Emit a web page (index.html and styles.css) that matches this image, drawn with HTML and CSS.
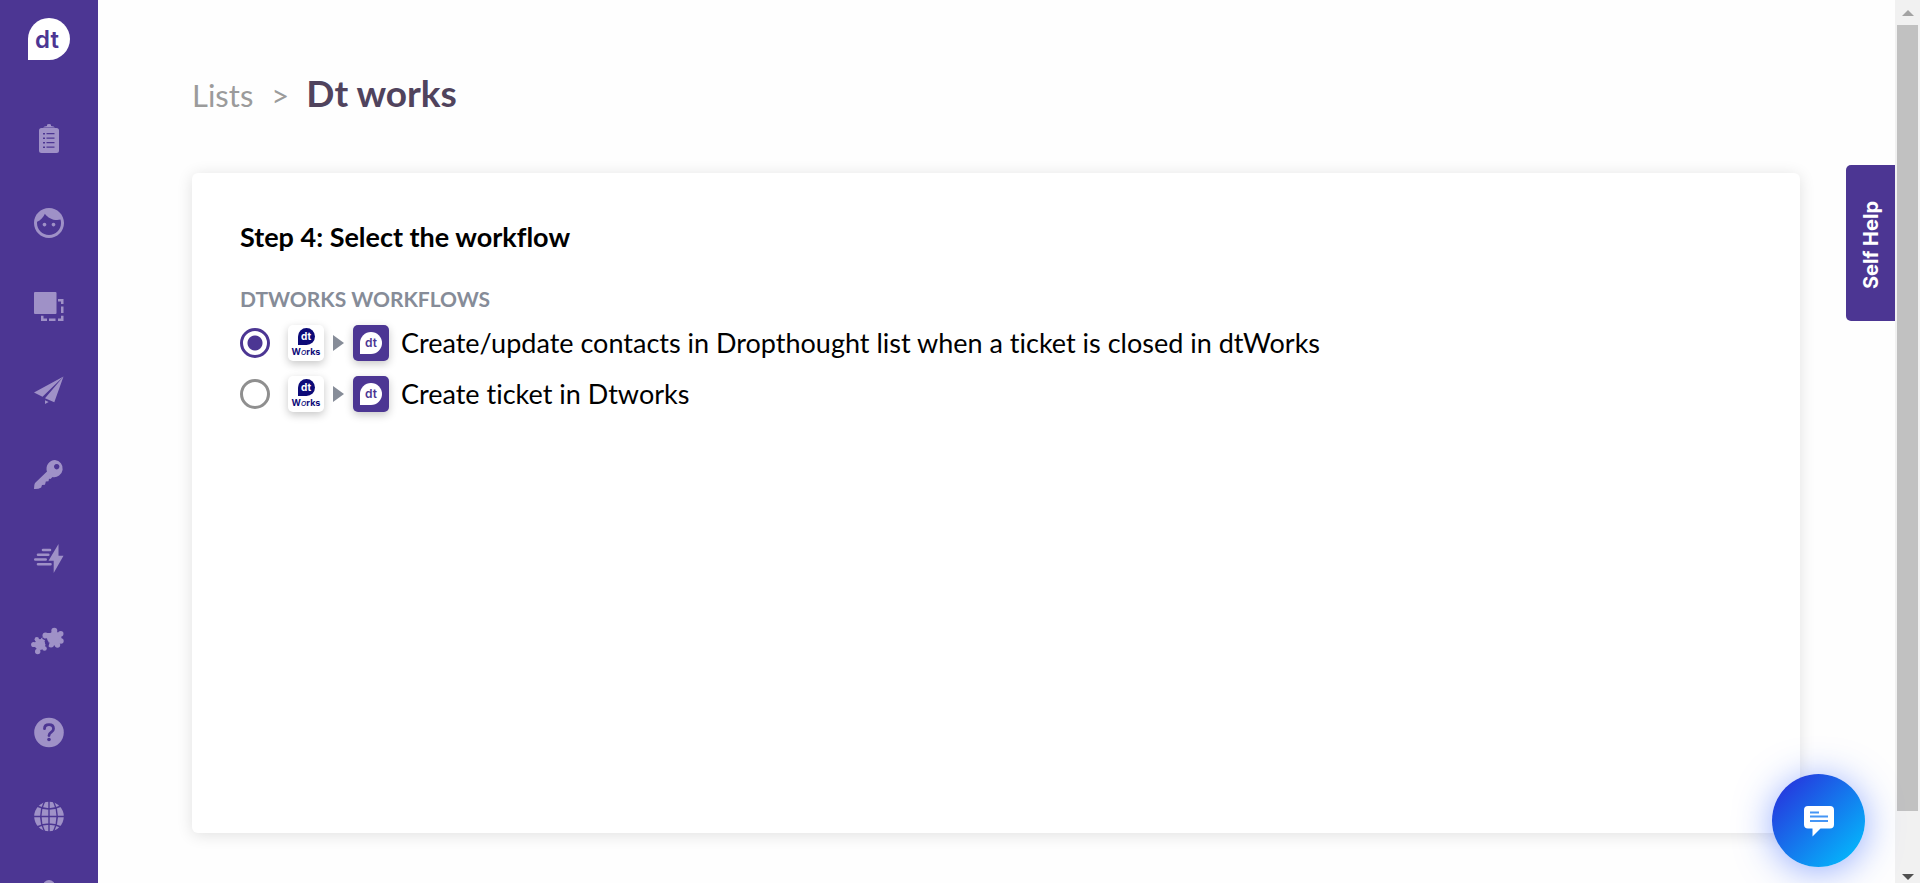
FILE: index.html
```html
<!DOCTYPE html>
<html lang="en">
  <head>
    <meta charset="UTF-8" />
    <meta name="viewport" content="width=device-width, initial-scale=1.0" />
    <title>Dt works</title>
    <link rel="stylesheet" href="styles.css">
  </head>
  <body>
    <nav class="sidebar">
      <a class="logo" href="#">dt</a>

      <div class="nav-group">
        <a class="nav-link" href="#" aria-label="Surveys">
          <svg viewBox="0 0 30 30">
            <path fill-rule="evenodd" d="M7.500 4h15q2.500 0 2.500 2.500v20q0 2.500-2.500 2.500h-15q-2.500 0-2.500-2.500v-20q0-2.500 2.500-2.500zM9 9h2v1.500H9zM12.500 9H20.500v1.200H12.500zM9 13.500h2v1.500H9zM12.500 13.500H20.500v1.200H12.500zM9 18h2v1.500H9zM12.500 18H20.500v1.200H12.500zM9 22.500h2v1.500H9zM12.500 22.500H20.500v1.200H12.500z" />
            <path d="M9 3.400q1-1.200 4-1.400v-1q0-1 2-1t2 1v1q3 .2 4 1.400z" />
          </svg>
        </a>
        <a class="nav-link" href="#" aria-label="Contacts">
          <svg viewBox="2 2 20 20">
            <path d="M9 11.750c-.69 0-1.250.56-1.250 1.250s.56 1.250 1.250 1.250 1.250-.56 1.250-1.250-.56-1.250-1.250-1.250zm6 0c-.69 0-1.250.56-1.250 1.250s.56 1.250 1.250 1.250 1.250-.56 1.250-1.250-.56-1.250-1.250-1.250zM12 2C6.480 2 2 6.480 2 12s4.480 10 10 10 10-4.480 10-10S17.520 2 12 2zm0 18c-4.410 0-8-3.590-8-8 0-.29.02-.58.05-.86 2.360-1.050 4.230-2.980 5.210-5.370C11.070 8.330 14.050 10 17.420 10c.78 0 1.530-.09 2.250-.26.21.71.33 1.470.33 2.260 0 4.410-3.590 8-8 8z" />
          </svg>
        </a>
        <a class="nav-link" href="#" aria-label="Templates">
          <svg viewBox="0 0 30 30">
            <rect width="22.500" height="22" rx="1" />
            <path d="M24 7h5.500v5h-2.500v-2.500h-3zM27 14.500h2.500v6.500H27zM27 23.700h2.500v5.300h-5.500v-2.500h3zM15 26.500h6.500v2.500H15zM7 23.700h2.500v2.800h3.500v2.500H7z" />
          </svg>
        </a>
        <a class="nav-link" href="#" aria-label="Send">
          <svg viewBox="0 0 30 30">
            <path d="M29.500 .5L0 16.500l8.500 4.300zM29.500 .5L20.300 26.300l-9.300-4zM11 24.300l3.700 1.600-3.700 2z" />
          </svg>
        </a>
        <a class="nav-link" href="#" aria-label="Access">
          <svg viewBox="0 0 30 30">
            <path fill-rule="evenodd" d="M21 0a8.600 8.600 0 1 1-2.500 17l-2 2-1.500-.2-.5 2.500-2.700.2-.8 3.200-3 .3-.8 2.500q-2.700 1.700-7.200 1.500 0-4.500 1-6L13 11.500A8.600 8.600 0 0 1 21 0zM22.700 4a2.700 2.700 0 1 0 .01 0z" />
          </svg>
        </a>
        <a class="nav-link" href="#" aria-label="Triggers">
          <svg viewBox="0 0 30 30">
            <path d="M24.500 0L14.500 16.700h5.200V29L29.500 11.700h-5z" />
            <path class="line" d="M9 6h7M4 10.700h10.300M1.300 15.500h10.400M4 20.200h12.500" />
          </svg>
        </a>
        <a class="nav-link" href="#" aria-label="Integrations">
          <svg viewBox="0 0 30 30">
            <circle cx="20.500" cy="10.500" r="7" />
            <circle cx="20.300" cy="2.800" r="3" />
            <circle cx="26.700" cy="5.800" r="2.800" />
            <circle cx="27" cy="13" r="2.700" />
            <circle cx="23.500" cy="17" r="2.700" />
            <circle cx="17" cy="16.500" r="3" />
            <circle cx="11.500" cy="7.500" r="3" />
            <path d="M11 5h9v8h-6z" />
            <circle cx="6" cy="16.500" r="5.400" />
            <circle cx="-.3" cy="16.500" r="2.600" />
            <circle cx="2.800" cy="11.200" r="2.200" />
            <circle cx="9" cy="11.800" r="2.300" />
            <circle cx="10.500" cy="20.500" r="2.300" />
            <circle cx="3.700" cy="23.500" r="2.700" />
            <path class="cut" d="M8.500 10.200l3.500 2-.3 2.800 3 .2-1.200 3.800" />
          </svg>
        </a>
      </div>

      <div class="nav-group">
        <a class="nav-link" href="#" aria-label="Help">
          <svg viewBox="0 0 30 30">
            <circle cx="15" cy="14.500" r="14.800" />
            <path class="cut wide" d="M10.500 10.700q0-4 4.500-4t4.500 4q0 2-2.200 3.500t-2.300 3.300" />
            <circle class="dot" cx="15" cy="21.500" r="1.800" />
          </svg>
        </a>
        <a class="nav-link" href="#" aria-label="Language">
          <svg viewBox="0 0 30 30">
            <circle cx="15" cy="14.500" r="14.800" />
            <path class="cut" d="M15-1v31M0 14.500h30M10.500-.5Q3 14.500 10.500 29.500M19.500-.5q7.500 15 0 30M3 4q12 6 24 0M3 25q12-6 24 0" />
          </svg>
        </a>
        <a class="nav-link account" href="#" aria-label="Account">
          <svg viewBox="0 0 30 30">
            <circle cx="15" cy="6" r="6" />
            <path d="M3 30q0-15 12-15t12 15z" />
          </svg>
        </a>
      </div>
    </nav>

    <main class="content">
      <header class="breadcrumb">
        <a class="crumb" href="#">Lists</a>
        <span class="crumb-sep">&gt;</span>
        <h1>Dt works</h1>
      </header>

      <form class="card">
        <h2>Step 4: Select the workflow</h2>
        <fieldset class="workflows">
          <legend>DTWORKS WORKFLOWS</legend>
          <div class="workflow">
            <input type="radio" id="updateContacts" name="workflow" checked />
            <label for="updateContacts">
              <span class="tile works"><span class="drop">dt</span><span class="works-name">W<i>o</i>rks</span></span>
              <span class="arrow"></span>
              <span class="tile dropthought"><span class="drop">dt</span></span>
              <span class="workflow-text">Create/update contacts in Dropthought list when a ticket is closed in dtWorks</span>
            </label>
          </div>
          <div class="workflow">
            <input type="radio" id="createTicket" name="workflow" />
            <label for="createTicket">
              <span class="tile works"><span class="drop">dt</span><span class="works-name">W<i>o</i>rks</span></span>
              <span class="arrow"></span>
              <span class="tile dropthought"><span class="drop">dt</span></span>
              <span class="workflow-text">Create ticket in Dtworks</span>
            </label>
          </div>
        </fieldset>
      </form>

      <button class="self-help" type="button">Self Help</button>
      <button class="chat" type="button" aria-label="Open chat">
        <svg viewBox="0 0 32 32">
          <path d="M5 1h22q4 0 4 4v14.500q0 4-4 4H17.500l-8 8v-8H5q-4 0-4-4V5q0-4 4-4z" fill="#fff" />
          <path d="M7 7.500h9M7 11.500h18M7 16h18" stroke="#4595f5" stroke-width="2" />
        </svg>
      </button>
    </main>

    <div class="scrollbar">
      <span class="scroll-up"></span>
      <span class="scroll-thumb"></span>
      <span class="scroll-down"></span>
    </div>
  </body>
</html>
```

FILE: styles.css
```css
* {
  box-sizing: border-box;
}

body {
  margin: 0;
  height: 100vh;
  display: flex;
  overflow: hidden;
  background: #fefefe;
  color: #000;
  font-family: Lato, "Open Sans", sans-serif;
  font-variant-ligatures: none;
}

/* Sidebar */
.sidebar {
  width: 98px;
  flex-shrink: 0;
  display: flex;
  flex-direction: column;
  align-items: center;
  padding-top: 18px;
  overflow: hidden;
  background: #4c3693;
}

.logo {
  width: 42px;
  height: 42px;
  flex-shrink: 0;
  margin-bottom: 64px;
  padding-right: 4px;
  border-radius: 50% 50% 50% 0;
  background: #fff;
  color: #4c3693;
  font: 600 24px/44px Inter, sans-serif;
  text-align: center;
  text-decoration: none;
}

.nav-group {
  display: flex;
  flex-direction: column;
  gap: 54px;
  margin-bottom: 60px;
}

.nav-link,
.nav-link svg {
  display: block;
  width: 30px;
  height: 30px;
  overflow: visible;
}

.nav-link svg {
  fill: #9f91c7;
}

.nav-link .line {
  stroke: #9f91c7;
  stroke-width: 2.6;
  stroke-linecap: round;
}

.nav-link .cut {
  fill: none;
  stroke: #4c3693;
  stroke-width: 1.4;
}

.nav-link .wide {
  stroke-width: 2.8;
  stroke-linecap: round;
}

.nav-link .dot {
  fill: #4c3693;
}

.account {
  margin-top: -6px;
}

/* Page content */
.content {
  flex: 1;
  display: flex;
  flex-direction: column;
  position: relative;
  padding: 70px 95px 50px 94px;
}

.breadcrumb {
  display: flex;
  align-items: baseline;
  height: 103px;
  color: #9b9b9b;
  font-size: 31px;
}

.crumb {
  color: inherit;
  text-decoration: none;
}

.crumb-sep {
  margin: 0 17px 0 18px;
}

h1 {
  margin: 0;
  color: #50435d;
  font-size: 37px;
  line-height: 46px;
}

.card {
  flex: 1;
  padding: 48px;
  border-radius: 6px;
  background: #fff;
  box-shadow: 0 2px 16px rgba(0, 0, 0, 0.12);
}

h2 {
  margin: 0 0 32px;
  font-size: 27px;
  line-height: 32px;
}

.workflows {
  margin: 0;
  padding: 0;
  border: 0;
}

legend {
  padding: 0;
  margin-bottom: 12px;
  color: #868c98;
  font-size: 21px;
  font-weight: 700;
  line-height: 28px;
}

.workflow {
  display: flex;
  align-items: center;
  margin-bottom: 15px;
}

.workflow input {
  appearance: none;
  width: 30px;
  height: 30px;
  margin: 0 18px 0 0;
  border: 3px solid #8f8f8f;
  border-radius: 50%;
}

.workflow input:checked {
  border-color: #4c3693;
  background: radial-gradient(circle, #4c3693 7px, transparent 8px);
}

.workflow label {
  display: flex;
  align-items: center;
}

.tile {
  width: 36px;
  height: 36px;
  display: flex;
  flex-direction: column;
  align-items: center;
  justify-content: center;
  border-radius: 5px;
  background: #fff;
  box-shadow: 0 3px 8px rgba(0, 0, 0, 0.22);
  font-family: Inter, sans-serif;
  font-weight: 700;
}

.drop {
  width: 17px;
  height: 17px;
  border-radius: 50% 50% 50% 0;
  background: #0c0a78;
  color: #fff;
  font-size: 10px;
  line-height: 17px;
  text-align: center;
}

.works-name {
  color: #0c0a78;
  font-size: 9px;
  line-height: 13px;
}

.works-name i {
  font-weight: 400;
}

.dropthought {
  background: #4c3693;
}

.dropthought .drop {
  width: 22px;
  height: 22px;
  background: #fff;
  color: #4c3693;
  font-size: 12px;
  font-weight: 600;
  line-height: 22px;
}

.arrow {
  margin: 0 9px;
  border: solid transparent;
  border-width: 8px 0 8px 11px;
  border-left-color: #868c98;
}

.workflow-text {
  margin-left: 12px;
  font-size: 27px;
  line-height: 36px;
}

/* Floating buttons */
.self-help {
  position: absolute;
  top: 165px;
  right: 0;
  width: 49px;
  height: 156px;
  padding: 0 0 4px;
  border: 0;
  border-radius: 0 5px 5px 0;
  background: #4c3693;
  color: #fff;
  font: 700 20px Inter, sans-serif;
  writing-mode: vertical-rl;
  transform: rotate(180deg);
}

.chat {
  position: absolute;
  right: 30px;
  bottom: 16px;
  width: 93px;
  height: 93px;
  display: flex;
  align-items: center;
  justify-content: center;
  padding: 0;
  border: 0;
  border-radius: 50%;
  background: linear-gradient(135deg, #2a27da, #00c6ff);
  box-shadow: 0 4px 36px rgba(40, 90, 255, 0.5);
}

.chat svg {
  width: 32px;
  height: 32px;
}

/* Scrollbar */
.scrollbar {
  width: 25px;
  flex-shrink: 0;
  display: flex;
  flex-direction: column;
  align-items: center;
  padding: 10px 2px 3px;
  background: #f1f1f1;
}

.scroll-up,
.scroll-down {
  border: solid transparent;
  border-width: 0 6px 6px;
  border-bottom-color: #a3a3a3;
}

.scroll-thumb {
  flex: 1;
  width: 21px;
  margin: 9px 0 63px;
  background: #c1c1c1;
}

.scroll-down {
  border-width: 6px 6px 0;
  border-top-color: #505050;
}
```
